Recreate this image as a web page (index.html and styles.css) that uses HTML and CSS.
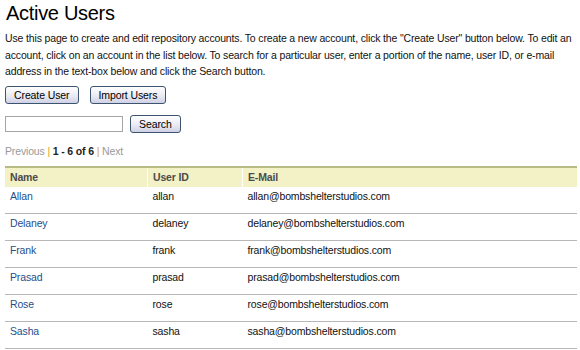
FILE: index.html
```html
<!DOCTYPE html>
<html>
<head>
<meta charset="utf-8">
<link rel="stylesheet" href="styles.css">
</head>
<body>
<div class="page">
  <h1 class="title">Active Users</h1>
  <p class="intro">Use this page to create and edit repository accounts. To create a new account, click the "Create User" button below. To edit an account, click on an account in the list below. To search for a particular user, enter a portion of the name, user ID, or e-mail address in the text-box below and click the Search button.</p>
  <div class="actions">
    <button class="btn">Create User</button>
    <button class="btn">Import Users</button>
  </div>
  <div class="search">
    <input class="search-input" type="text">
    <button class="btn">Search</button>
  </div>
  <div class="pager"><span class="muted">Previous</span> <span class="sep">|</span> <b>1 - 6 of 6</b> <span class="sep">|</span> <span class="muted">Next</span></div>
  <table class="users">
    <thead>
      <tr><th class="c-name">Name</th><th class="c-id">User ID</th><th class="c-mail">E-Mail</th></tr>
    </thead>
    <tbody>
      <tr><td><a href="#">Allan</a></td><td>allan</td><td>allan@bombshelterstudios.com</td></tr>
      <tr><td><a href="#">Delaney</a></td><td>delaney</td><td>delaney@bombshelterstudios.com</td></tr>
      <tr><td><a href="#">Frank</a></td><td>frank</td><td>frank@bombshelterstudios.com</td></tr>
      <tr><td><a href="#">Prasad</a></td><td>prasad</td><td>prasad@bombshelterstudios.com</td></tr>
      <tr><td><a href="#">Rose</a></td><td>rose</td><td>rose@bombshelterstudios.com</td></tr>
      <tr><td><a href="#">Sasha</a></td><td>sasha</td><td>sasha@bombshelterstudios.com</td></tr>
    </tbody>
  </table>
</div>
</body>
</html>
```
FILE: styles.css
```css
html, body {
  margin: 0;
  padding: 0;
  background: #fff;
}
body {
  font-family: "Liberation Sans", Arial, sans-serif;
  font-size: 10.5px;
  letter-spacing: -0.15px;
  color: #111;
}
.page {
  padding: 0 4px 0 5px;
}
.title {
  font-size: 20px;
  letter-spacing: -0.3px;
  font-weight: normal;
  margin: 0;
  padding-left: 1px;
  line-height: 26px;
  color: #000;
}
.intro {
  margin: 4px 0 0;
  line-height: 16.5px;
}
.actions {
  display: flex;
  gap: 11px;
  margin-top: 6px;
}
.btn {
  font-family: "Liberation Sans", Arial, sans-serif;
  font-size: 10.5px;
  letter-spacing: -0.1px;
  color: #000;
  height: 18px;
  padding: 0 8px;
  border: 1px solid #3d5470;
  border-radius: 3px;
  background: linear-gradient(#ffffff, #e8e8f2 60%, #cfd0e4);
  line-height: 16px;
}
.search {
  display: flex;
  align-items: center;
  gap: 7px;
  margin-top: 11px;
}
.search-input {
  width: 114px;
  height: 12px;
  padding: 1px;
  border: 1px solid #a5a5a5;
  margin: 0;
}
.pager {
  margin-top: 11px;
  line-height: 14px;
  color: #222;
}
.muted { color: #999; }
.sep { color: #d9a52a; }
.users {
  margin-top: 8px;
  width: 572px;
  border-collapse: collapse;
}
.users th {
  background: #f3f1c6;
  border-top: 2px solid #b8bc83;
  border-right: 1px solid #fff;
  text-align: left;
  color: #4b4b4b;
  font-weight: bold;
  height: 19px;
  padding: 0 5px;
}
.users th:last-child { border-right: 0; }
.c-name { width: 132px; }
.c-id { width: 84px; }
.users td {
  height: 24px;
  padding: 2px 5px 0;
  line-height: 14px;
  border-bottom: 1px solid #b7b7b7;
  vertical-align: top;
}
.users a {
  color: #1f4f8a;
  text-decoration: none;
}
```
